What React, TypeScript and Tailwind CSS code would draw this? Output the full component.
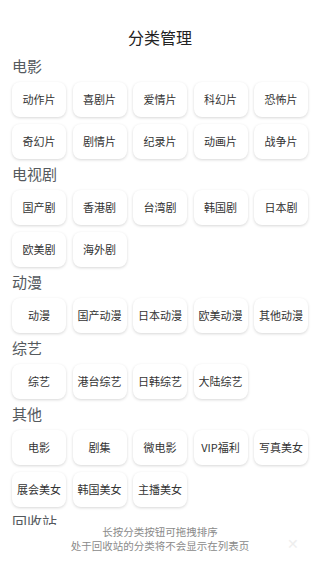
import React from 'react';

const sections: { title: string; items: string[] }[] = [
  { title: '电影', items: ['动作片', '喜剧片', '爱情片', '科幻片', '恐怖片', '奇幻片', '剧情片', '纪录片', '动画片', '战争片'] },
  { title: '电视剧', items: ['国产剧', '香港剧', '台湾剧', '韩国剧', '日本剧', '欧美剧', '海外剧'] },
  { title: '动漫', items: ['动漫', '国产动漫', '日本动漫', '欧美动漫', '其他动漫'] },
  { title: '综艺', items: ['综艺', '港台综艺', '日韩综艺', '大陆综艺'] },
  { title: '其他', items: ['电影', '剧集', '微电影', 'VIP福利', '写真美女', '展会美女', '韩国美女', '主播美女'] },
  { title: '回收站', items: [] },
];

const font = { fontFamily: '"Noto Sans CJK SC", "Noto Sans", sans-serif' };

export default function App() {
  return (
    <div className="relative h-[570px] w-[320px] overflow-hidden bg-white" style={font}>
      {/* Header */}
      <div className="flex h-[51px] items-end justify-center pb-[2px]">
        <h1 className="text-[16px] leading-[24px] text-[#222]">分类管理</h1>
      </div>

      {/* Sections */}
      <div className="px-[12px]">
        {sections.map((s) => (
          <div key={s.title}>
            <div className="flex h-[31px] items-center text-[15px] text-[#555a5e]">{s.title}</div>
            {s.items.length > 0 && (
              <div className="grid grid-cols-5 gap-x-[6.5px] gap-y-[7px]">
                {s.items.map((it) => (
                  <div
                    key={it}
                    className="flex h-[35px] items-center justify-center rounded-[8px] bg-white text-[11px] text-[#333] shadow-[0_1px_3px_rgba(0,0,0,0.16)] whitespace-nowrap"
                  >
                    {it}
                  </div>
                ))}
              </div>
            )}
          </div>
        ))}
      </div>

      {/* Bottom hint */}
      <div className="absolute bottom-0 left-0 right-0 h-[45px] bg-white">
        <p className="text-center text-[10.5px] leading-[13.5px] text-[#8a8a8a]">长按分类按钮可拖拽排序</p>
        <p className="text-center text-[10.5px] leading-[13.5px] text-[#8a8a8a]">处于回收站的分类将不会显示在列表页</p>
        <span className="absolute right-[21px] top-[11px] text-[14px] leading-none text-[#eeeeee]">✕</span>
      </div>
    </div>
  );
}
